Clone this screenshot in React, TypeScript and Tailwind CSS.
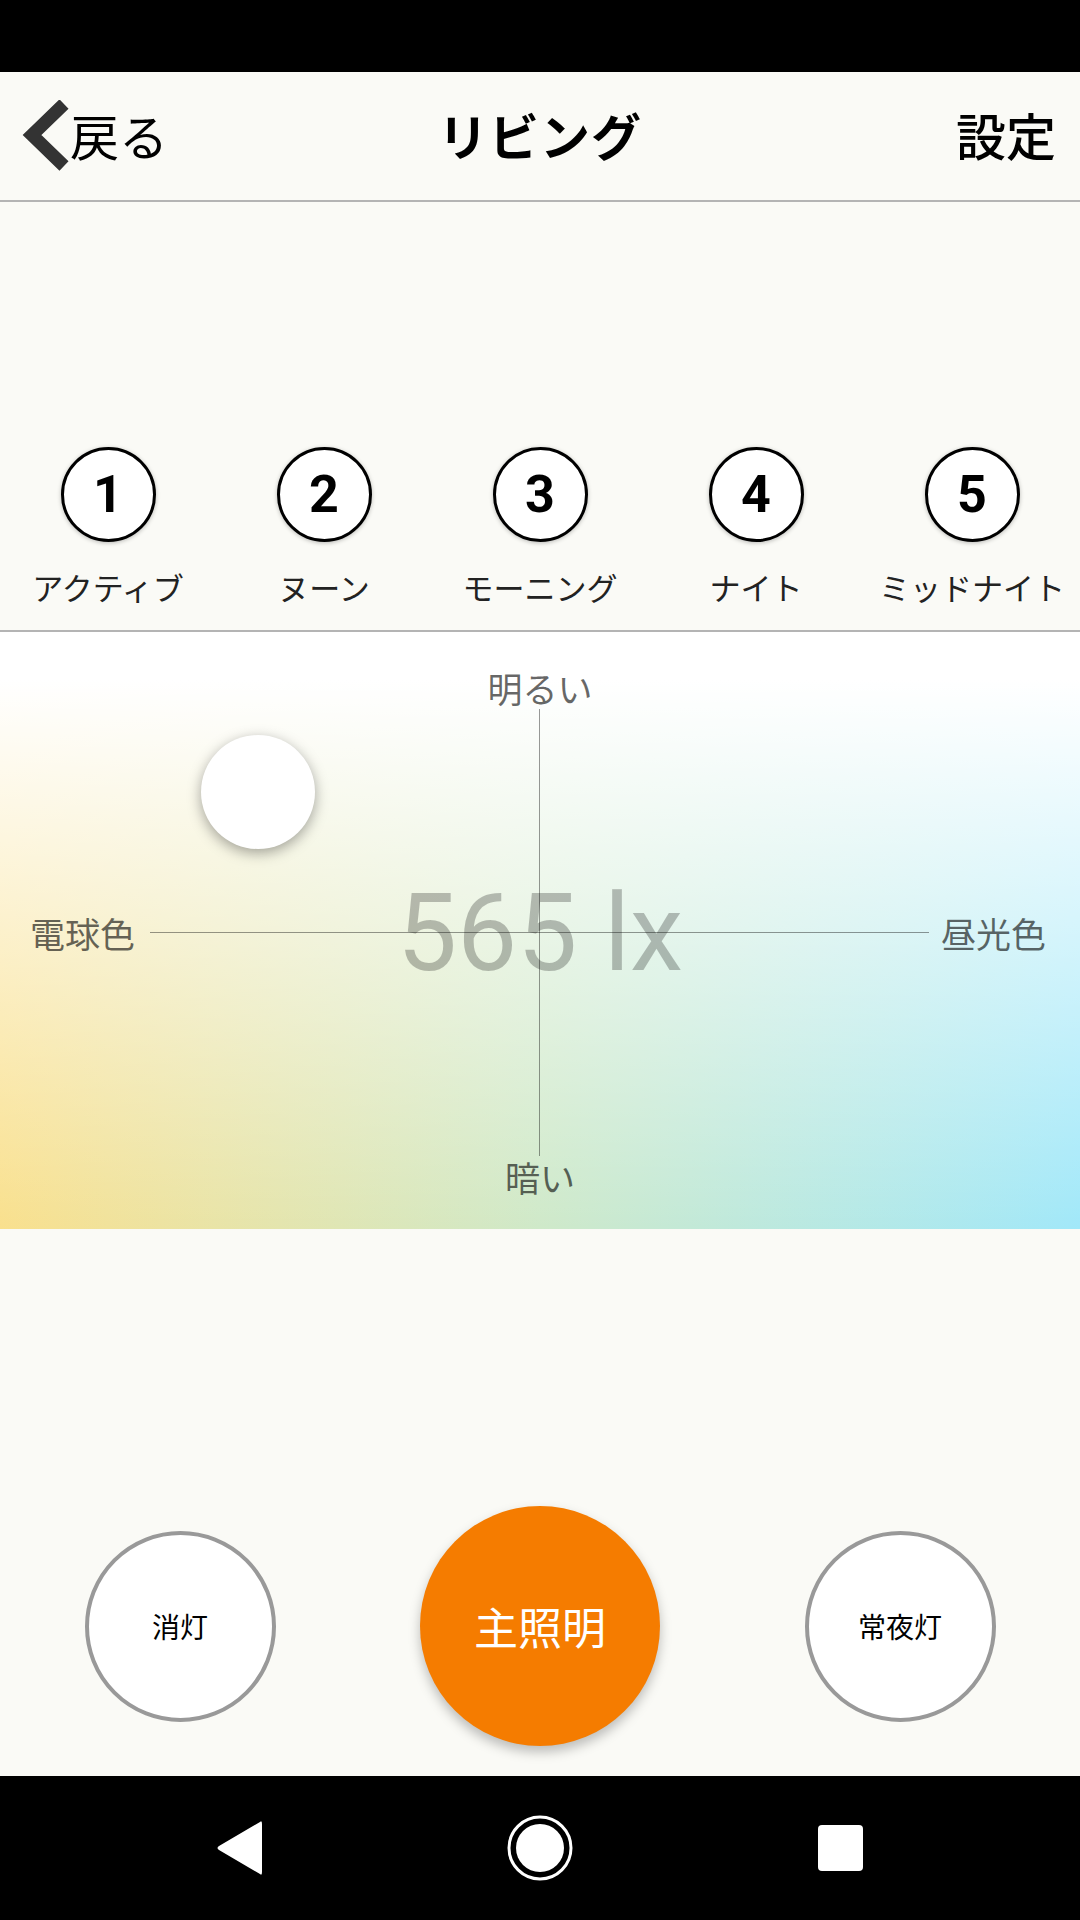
import React from "react";

const jp = "font-['Noto_Sans_CJK_JP','Noto_Sans',sans-serif]";
const roboto = "font-['Roboto','Noto_Sans',sans-serif]";

const presets = [
  { n: "1", label: "アクティブ" },
  { n: "2", label: "ヌーン" },
  { n: "3", label: "モーニング" },
  { n: "4", label: "ナイト" },
  { n: "5", label: "ミッドナイト" },
];

export default function App() {
  return (
    <div className={`w-[1080px] h-[1920px] flex flex-col bg-[#fafaf6] overflow-hidden ${jp}`}>
      {/* status bar */}
      <div className="h-[72px] bg-black shrink-0" />

      {/* header */}
      <div className="h-[130px] shrink-0 border-b-2 border-[#b4b4b4] grid grid-cols-[1fr_auto_1fr] items-center px-[22px]">
        <div className="flex items-center">
          <svg width="48" height="72" viewBox="0 0 48 72" className="shrink-0">
            <polyline points="42,4 10,35 42,66" fill="none" stroke="#333333" strokeWidth="13" strokeLinejoin="miter" />
          </svg>
          <span className="text-[49px] leading-none text-black pb-[4px]">戻る</span>
        </div>
        <div className="text-[50px] font-bold leading-none text-black tracking-[1px] pb-[4px]">リビング</div>
        <div className="justify-self-end text-[50px] font-medium leading-none text-black pr-[2px] pb-[4px]">設定</div>
      </div>

      {/* presets */}
      <div className="h-[430px] shrink-0 border-b-2 border-[#b4b4b4] grid grid-cols-5 items-end pb-[24px]">
        {presets.map((p) => (
          <div key={p.n} className="flex flex-col items-center">
            <div className="w-[95px] h-[95px] rounded-full border-[3px] border-black bg-white flex items-center justify-center shadow-[0_1px_4px_rgba(0,0,0,0.25)]">
              <span className={`${roboto} font-bold text-[52px] leading-none text-black`}>{p.n}</span>
            </div>
            <div className="mt-[24px] h-[40px] flex items-center text-[31px] leading-none text-[#222] whitespace-nowrap">
              {p.label}
            </div>
          </div>
        ))}
      </div>

      {/* color / brightness pad */}
      <div className="relative h-[597px] shrink-0 bg-linear-to-r from-[#f9e08d] via-[#cfe9c9] to-[#a1e8f9] overflow-hidden">
        <div className="absolute inset-0 bg-linear-to-b from-white from-8% via-white/55 via-50% to-white/0 to-100%" />
        {/* axes */}
        <div className="absolute left-[539px] top-[77px] w-px h-[447px] bg-black/40" />
        <div className="absolute left-[150px] top-[300px] w-[779px] h-px bg-black/40" />
        {/* value */}
        <div className={`absolute left-0 right-0 top-[236px] h-[130px] flex items-center justify-center ${roboto} text-[107px] leading-none text-black/25`}>
          565 lx
        </div>
        {/* labels */}
        <div className="absolute left-0 right-0 top-[36px] flex justify-center text-[35px] leading-[40px] text-black/60">明るい</div>
        <div className="absolute left-0 right-0 top-[525px] flex justify-center text-[35px] leading-[40px] text-black/60">暗い</div>
        <div className="absolute left-[30px] top-[281px] text-[35px] leading-[40px] text-black/60">電球色</div>
        <div className="absolute left-[941px] top-[281px] text-[35px] leading-[40px] text-black/60">昼光色</div>
        {/* knob */}
        <div className="absolute left-[201px] top-[103px] w-[114px] h-[114px] rounded-full bg-white shadow-[0_4px_14px_rgba(0,0,0,0.35)]" />
      </div>

      {/* buttons */}
      <div className="flex-1 grid grid-cols-3 items-end pb-[30px]">
        <div className="flex justify-center items-center h-[240px]">
          <div className="w-[191px] h-[191px] rounded-full border-[4px] border-[#999] bg-white flex items-center justify-center">
            <span className="text-[28px] leading-none text-black">消灯</span>
          </div>
        </div>
        <div className="flex justify-center items-center h-[240px]">
          <div className="w-[240px] h-[240px] rounded-full bg-[#f57c00] flex items-center justify-center shadow-[0_6px_12px_rgba(0,0,0,0.25)]">
            <span className="text-[44px] leading-none text-white">主照明</span>
          </div>
        </div>
        <div className="flex justify-center items-center h-[240px]">
          <div className="w-[191px] h-[191px] rounded-full border-[4px] border-[#999] bg-white flex items-center justify-center">
            <span className="text-[28px] leading-none text-black">常夜灯</span>
          </div>
        </div>
      </div>

      {/* nav bar */}
      <div className="h-[144px] shrink-0 bg-black flex items-center justify-center">
        <div className="grid grid-cols-3 w-[1080px] items-center">
          <div className="flex justify-center pl-[120px]">
            <svg width="50" height="58" viewBox="0 0 50 58">
              <path d="M45 3 Q47 1 47 5 L47 53 Q47 57 45 55 L4 31 Q1 29 4 27 Z" fill="white" />
            </svg>
          </div>
          <div className="flex justify-center">
            <svg width="68" height="68" viewBox="0 0 68 68">
              <circle cx="34" cy="34" r="31" fill="none" stroke="white" strokeWidth="3" />
              <circle cx="34" cy="34" r="24" fill="white" />
            </svg>
          </div>
          <div className="flex justify-center pr-[120px]">
            <div className="w-[45px] h-[46px] rounded-[4px] bg-white" />
          </div>
        </div>
      </div>
    </div>
  );
}
